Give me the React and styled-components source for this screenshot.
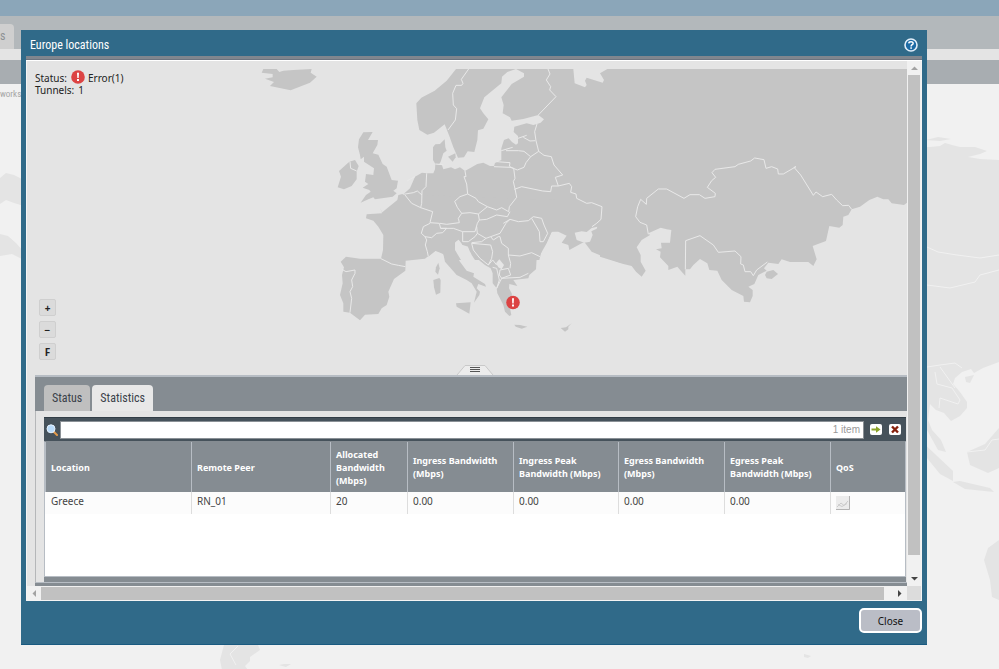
// src/components/LocationsDialog/App.jsx
import React, { useState } from 'react';
import styled, { createGlobalStyle } from 'styled-components';

const GlobalStyle = createGlobalStyle`
  * {
    box-sizing: border-box;
  }
  body {
    margin: 0;
    background-color: #f1f1f1;
    color: #222222;
    font-family: "Noto Sans", "Open Sans", sans-serif;
    font-size: 10px;
    line-height: 12px;
  }
  button, input {
    font: inherit;
    color: inherit;
  }
`;

const narrow = '"Roboto Condensed", "Open Sans Condensed", "Arial Narrow", "Liberation Sans", sans-serif';

/* Page behind the dialog */
const Page = styled.div`
  display: flex;
  flex-direction: column;
  height: 100vh;
  overflow: hidden;
`;

const TopBar = styled.div`
  flex: none;
  height: 16px;
  background-color: #8ba6b9;
`;

const PageTabs = styled.div`
  flex: none;
  display: flex;
  align-items: flex-end;
  height: 33px;
  background-color: #b3b8bb;
`;

const PageTab = styled.div`
  width: 14px;
  height: 25px;
  border-top-right-radius: 4px;
  background-color: #cfcfcf;
  color: #8d9194;
  font-family: ${narrow};
  font-size: 12px;
  line-height: 25px;
`;

const Strip = styled.div`
  flex: none;
  height: 11px;
  background-color: #e4e4e4;
`;

const PageHeading = styled.div`
  flex: none;
  height: 24px;
  background-color: #a8adb1;
`;

const PageBody = styled.div`
  display: grid;
  flex: 1;
  min-height: 0;

  > * {
    grid-area: 1 / 1;
  }
`;

const Crumb = styled.div`
  padding-top: 4px;
  color: #a5a5a5;
  font-family: ${narrow};
  font-size: 9px;
`;

const WorldSvg = styled.svg`
  display: block;
  width: 100%;
  height: 100%;
`;

/* Dialog */
const Overlay = styled.div`
  position: fixed;
  inset: 0;
  padding: 30px 72px 24px 21px;
`;

const Dialog = styled.section`
  padding: 0 5px 11px;
  border-bottom: 1px solid #195a80;
  background-color: #306a89;
`;

const TitleBar = styled.header`
  display: flex;
  align-items: center;
  justify-content: space-between;
  height: 26px;
  padding: 3px 4px 0;
`;

const Title = styled.h1`
  margin: 0;
  color: #ffffff;
  font-family: ${narrow};
  font-size: 12px;
  font-weight: normal;
  line-height: 16px;
`;

const IconButton = styled.button`
  display: flex;
  flex: none;
  padding: 0;
  border: 0;
  background: none;
`;

const Frame = styled.div`
  display: grid;
  grid-template-columns: minmax(0, 1fr) 14px;
  border: 1px solid #f4f4f4;
  border-top: 0;
  background-color: #e4e4e4;
`;

const FrameTop = styled.div`
  grid-column: 1 / -1;
  height: 5px;
  margin: 0 -1px;
  border-top: 3px solid #80868e;
  border-bottom: 1px solid #ffffff;
  background-color: #6c7480;
`;

const ScrollBar = styled.div`
  display: flex;
  flex-direction: ${(p) => (p.$horizontal ? 'row' : 'column')};
  height: ${(p) => (p.$horizontal ? '14px' : 'auto')};
  padding: ${(p) => (p.$horizontal ? '1px 0 0' : '1px 1px 0')};
  background-color: #f1f1f1;
`;

const ArrowButton = styled.button`
  display: flex;
  flex: none;
  align-items: center;
  justify-content: center;
  width: ${(p) => (p.$wide ? '14px' : '12px')};
  height: 13px;
  padding: 0;
  border: 0;
  background: none;
`;

const Thumb = styled.div`
  flex: 1;
  margin: ${(p) => p.$margin};
  background-color: #c1c1c1;
`;

const Corner = styled.div`
  background-color: #dcdcdc;
`;

const MapPanel = styled.div`
  display: grid;

  > * {
    grid-area: 1 / 1;
  }
`;

const MapSvg = styled.svg`
  display: block;
  width: 100%;
`;

const MapOverlay = styled.div`
  display: flex;
  flex-direction: column;
  justify-content: space-between;
  padding: 8px 8px 15px;
`;

const StatusLine = styled.div`
  display: flex;
  align-items: flex-end;
  gap: ${(p) => p.$gap};
  height: ${(p) => p.$height};
`;

const ZoomButtons = styled.div`
  display: flex;
  flex-direction: column;
  gap: 5px;
  padding-left: 4px;
`;

const ZoomButton = styled.button`
  width: 17px;
  height: 17px;
  padding: 0;
  border: 1px solid #cfcfcf;
  border-radius: 2px;
  background-color: #dbdbdb;
  font-weight: bold;
  line-height: 14px;
`;

const Splitter = styled.div`
  display: flex;
  align-items: flex-end;
  justify-content: center;
  padding-left: 16px;
  pointer-events: none;
`;

const LowerPanel = styled.div`
  margin-left: 8px;
  border-top: 2px solid #b7bdc4;
  border-bottom: 3px solid #858c92;
`;

const TabBar = styled.div`
  display: flex;
  align-items: flex-end;
  gap: 2px;
  height: 34px;
  padding-left: 9px;
  background-color: #858c92;
`;

const Tab = styled.button`
  height: 26px;
  padding: 0 8px;
  border: 0;
  border-radius: 4px 4px 0 0;
  background-color: ${(p) => (p.$active ? '#e8e8e8' : '#bfbfbf')};
  color: #3a4149;
  font-family: ${narrow};
  font-size: 12px;
`;

const TabContent = styled.div`
  padding: 6px 1px 0 8px;
  border-left: 1px solid #b5b7b9;
  border-bottom: 1px solid #b7bdc4;
`;

const SearchBar = styled.div`
  display: flex;
  align-items: center;
  height: 24px;
  padding: 0 5px 0 2px;
  border-top: 1px solid #323d46;
  background-color: #46525b;
`;

const SearchField = styled.label`
  display: flex;
  flex: 1;
  align-items: center;
  height: 18px;
  margin: 0 6px 0 2px;
  padding: 0 3px;
  border: 1px solid #8b9196;
  background-color: #ffffff;
  color: #999999;
  font-family: "Liberation Sans", Arial, sans-serif;
  font-size: 10px;
`;

const SearchInput = styled.input`
  flex: 1;
  min-width: 0;
  height: 16px;
  padding: 0;
  border: 0;
  outline: 0;
  background: none;
`;

const SearchActions = styled.div`
  display: flex;
  gap: 7px;
`;

const GridBody = styled.div`
  height: 136px;
  border: 1px solid #b7bdc4;
  border-top-color: #858c92;
  background-color: #ffffff;
`;

const GridFooter = styled.div`
  height: 5px;
  background-color: #858c92;
`;

const Table = styled.table`
  width: 100%;
  border-collapse: separate;
  border-spacing: 0;
  table-layout: fixed;
`;

const HeadCell = styled.th`
  width: ${(p) => p.$width};
  height: 50px;
  padding: 0 3px 0 5px;
  border-left: 1px solid #b7bdc4;
  background-color: #858c92;
  color: #ffffff;
  font-size: 9px;
  font-weight: bold;
  line-height: 13px;
  text-align: left;
`;

const Cell = styled.td`
  height: 22px;
  padding: 0 5px 4px;
  border-left: 1px solid #dddddd;
  background-color: #fcfcfc;
  color: #444444;

  &:first-child {
    border-left-color: #fcfcfc;
  }
  &:last-child {
    padding-bottom: 0;
  }
`;

const Footer = styled.footer`
  display: flex;
  justify-content: flex-end;
  padding-top: 7px;
`;

const CloseButton = styled.button`
  width: 63px;
  height: 25px;
  border: 2px solid #ffffff;
  border-radius: 5px;
  background-color: #babdc6;
  color: #111111;
`;

const columns = [
    { label: 'Location', width: '146px' },
    { label: 'Remote Peer', width: '139px' },
    { label: 'Allocated Bandwidth (Mbps)', width: '77px' },
    { label: 'Ingress Bandwidth (Mbps)', width: '106px' },
    { label: 'Ingress Peak Bandwidth (Mbps)', width: '105px' },
    { label: 'Egress Bandwidth (Mbps)', width: '106px' },
    { label: 'Egress Peak Bandwidth (Mbps)', width: '106px' },
    { label: 'QoS', width: 'auto' },
];

const rows = [
    ['Greece', 'RN_01', '20', '0.00', '0.00', '0.00', '0.00'],
];

const Arrow = ({ d, color = '#444444' }) => (
    <svg width="7" height="7" viewBox="0 0 7 7">
        <path d={d} fill={color} />
    </svg>
);

const ErrorSign = () => (
    <>
        <circle cx="7" cy="7" r="6.8" fill="#dc4343" />
        <path d="M6 2.8h2l-.3 5.2H6.3z" fill="#ffffff" />
        <rect x="6" y="9" width="2" height="2" fill="#ffffff" />
    </>
);

const WorldMap = () => (
    <WorldSvg viewBox="0 84 999 585" preserveAspectRatio="xMinYMin slice">
        <g fill="#e4e4e4">
            <path d="M900 148L930 147 940 146 945 143 952 145 960 147 975 147 987 151 980 154 968 157 980 159 999 160 999 362 983 368 974 373 971 369 962 372 955 378 953 384 960 392 967 402 967 408 960 416 951 421 944 413 936 410 930 404 928 420 932 430 941 440 946 452 938 450 927 430 900 420z" />
            <path d="M926 140L938 137 951 139 940 141z" />
            <path d="M965 377L974 375 970 383 966 382z" />
            <path d="M920 440L936 455 953 471 953 481 940 474 927 458z" />
            <path d="M953 482L960 481 990 488 994 492 965 489z" />
            <path d="M967 452L985 444 999 428 999 468 988 473 970 465z" />
            <path d="M999 540L988 548 984 560 990 580 992 597 999 600z" />
            <path d="M224 645L258 645 260 650 250 657 250 661 245 666 248 670 222 670 220 660z" />
            <path d="M279 665L284 664 291 664 286 667z" />
            <path d="M804 654L811 656 808 658 804 657z" />
            <path d="M0 178L6 173 14 175 24 180 24 206 14 203 6 200 0 204z" />
            <path d="M0 234L8 236 16 243 24 252 24 260 12 254 0 256z" />
        </g>
        <g fill="none" stroke="#f1f1f1">
            <path d="M927 247L938 252 957 255 980 258 999 255" />
            <path d="M927 285L950 288 975 282 980 275 999 270" />
            <path d="M927 367L940 365 955 363 962 368" />
            <path d="M935 372L937 384 952 388 960 400 958 404 940 398 939 408" />
            <path d="M940 367L955 388" />
            <path d="M967 452L985 450 992 440 999 439" />
            <path d="M238 646L230 654 236 665" />
        </g>
    </WorldSvg>
);

/* Outlines are drawn at three times their final size, one group per region */
const regions = {
    northWest: 'translate(240 60) scale(0.33333)',
    central: 'translate(400 60) scale(0.33333)',
    east: 'translate(600 60) scale(0.33333)',
    south: 'translate(320 180) scale(0.33333)',
};

const Land = () => (
    <g fill="#c5c5c5">
        <g transform={regions.northWest}>
            <path d="M70 27L65 38 98 42 98 52 75 56 102 66 90 78 152 91 210 68 230 50 212 38 215 27 160 30 130 32 118 36 110 27z" />
            <path d="M370 217L398 216 384 240 414 240 412 255 398 280 415 284 428 312 440 320 455 360 474 362 470 385 460 392 470 400 458 410 405 418 400 412 385 418 362 428 378 405 392 395 388 390 368 383 385 372 375 365 378 342 400 345 402 325 372 305 372 290 362 298 360 285 354 262 357 238z" />
            <path d="M345 300L328 305 297 333 303 350 293 382 312 388 335 378 350 358 350 335 356 318z" />
        </g>
        <g transform={regions.central}>
            <path d="M168 27L140 62 104 92 64 113 49 130 52 180 58 210 82 224 102 218 134 193 148 228 160 262 174 293 192 292 203 274 223 276 232 240 234 211 250 206 265 178 250 160 240 145 253 112 304 70 306 50 322 36 348 27z" />
            <path d="M348 27L372 40 372 50 335 72 304 112 311 135 308 160 330 172 335 182 370 177 415 165 432 178 422 188 411 192 400 195 380 190 343 200 341 216 354 228 354 250 348 254 336 246 326 235 312 240 304 265 304 300 285 309 282 318 270 318 250 308 232 312 195 333 180 322 165 328 153 322 130 328 126 316 106 312 105 328 100 340 80 340 66 338 45 350 30 385 10 403 0 406 0 590 85 590 110 570 130 582 137 600 183 600 165 570 165 545 180 537 188 555 205 560 215 585 225 600 418 600 428 560 438 550 443 540 455 515 475 515 500 527 485 548 505 555 508 570 545 550 553 546 575 575 610 590 660 608 660 27 622 27 600 40 612 60 608 68 560 53 555 62 560 75 555 82 524 70 520 27z" />
            <path d="M106 312L99 300 99 262 106 253 120 252 134 238 136 262 140 272 130 280 122 305 118 312z" />
            <path d="M144 290L166 280 167 292 158 305z" />
            <path d="M524 518L545 514 560 516 575 504 592 500 590 506 574 514 578 525 570 545 553 548 530 540z" fill="#e4e4e4" />
        </g>
        <g transform={regions.east}>
            <path d="M30 27L921 27 921 428 912 435 875 430 865 418 850 418 832 410 808 420 780 440 755 448 745 465 730 470 728 495 718 503 688 498 678 543 638 558 650 598 640 618 625 606 570 606 545 598 535 612 505 608 492 625 500 632 475 645 463 672 445 680 458 690 458 708 450 727 432 725 430 708 395 690 365 660 352 632 328 630 322 610 300 597 280 615 270 628 256 628 256 647 245 635 232 620 205 630 205 618 180 592 182 575 168 568 185 565 183 548 210 548 214 510 200 508 182 503 145 520 150 525 125 540 110 562 122 585 122 605 137 632 125 650 108 635 95 618 70 612 0 590 0 200 30 200z" />
            <path d="M495 645L500 635 520 630 534 642 515 657 500 655z" />
        </g>
        <g transform={regions.south}>
            <path d="M245 43L235 45 232 60 185 98 181 82 186 100 140 103 138 115 160 122 175 140 190 165 189 210 183 236 120 236 78 230 62 245 72 262 66 285 68 310 60 345 70 370 70 395 90 398 120 421 135 404 175 402 185 385 200 375 208 350 205 335 222 297 256 272 257 242 315 236 345 212 370 222 375 245 410 285 440 300 455 310 470 335 462 368 478 345 480 335 470 325 475 312 498 320 495 312 460 290 462 280 440 272 420 245 405 220 403 190 415 178 428 195 442 195 450 215 470 235 495 255 512 265 518 280 518 310 530 325 532 340 550 375 555 395 568 408 574 405 570 385 578 370 575 340 567 325 568 312 592 318 580 300 625 295 628 285 648 268 650 235 660 225 680 190 695 155 715 150 715 60z" />
            <path d="M348 262L355 248 359 265 354 284 346 275z" />
            <path d="M340 300L358 294 362 300 361 338 348 344 342 322z" />
            <path d="M408 370L452 367 448 401 410 380z" />
            <path d="M583 434L600 435 622 440 605 446 587 440z" />
            <path d="M722 444L738 442 755 430 745 440 745 448 735 455z" />
            <path d="M528 250L538 238 552 255 545 268 535 262z" fill="#e6e6e6" />
        </g>
    </g>
);

const Borders = () => (
    <g fill="none" stroke="#e9e9e9" strokeWidth="3">
        <g transform={regions.northWest}>
            <path d="M330 305L332 325 350 333" />
        </g>
        <g transform={regions.central}>
            <path d="M206 27L184 58 189 70 185 76 168 76 158 100 160 135 170 146 166 180 144 210" />
            <path d="M444 27L450 42 439 60 452 80 449 90 468 110 415 165" />
            <path d="M354 235L380 226M370 232L390 243 406 242M411 192L404 215 408 242 416 274" />
            <path d="M304 272L338 262M318 272L355 272 372 274 392 290 416 274" />
            <path d="M392 290L378 308 372 322 352 330 340 325 330 320" />
            <path d="M290 305L330 308 328 320M282 320L330 322 341 325 345 355 340 365 345 386" />
            <path d="M416 274L432 286 454 290 462 315 488 345 466 352 475 378" />
            <path d="M343 388L365 380 428 393 452 395 455 378 475 378 508 370 515 380 512 397 528 402 530 415 560 430 575 428 606 440 603 478 590 490 576 500" />
            <path d="M345 386L350 412 328 440 326 455 305 443 290 450 262 440" />
            <path d="M195 333L198 350 192 350 200 372 203 402 228 415 235 425 262 440 235 462 210 458 185 460 172 442 164 424 180 410 203 402" />
            <path d="M185 460L175 475 178 488 140 493 120 490" />
            <path d="M22 362L45 350M106 312L130 314" />
            <path d="M80 340L78 380 66 392 65 430 62 443 98 455 90 488" />
            <path d="M10 403L40 398 52 393 66 405M15 405L35 430 62 443" />
            <path d="M90 488L118 490 122 505 140 505 128 518 110 520 95 533 75 530 64 520 70 500 90 490" />
            <path d="M75 530L80 540 76 555 82 575 85 590" />
            <path d="M122 505L160 505 188 515 225 515 232 490 238 480 235 462" />
            <path d="M238 480L260 478 290 465 322 470 330 455" />
            <path d="M330 478L318 490 300 520 272 530 258 535 232 520 230 500" />
            <path d="M310 490L330 478 355 485 385 482 400 470 425 475 432 495 443 520 430 545 420 545 418 515 395 475" />
            <path d="M188 515L188 545 205 545 225 530 232 520M258 535L245 545 215 548" />
            <path d="M272 530L280 540 295 530 300 530 305 550 325 565 325 585 360 588 395 578 420 590" />
        </g>
        <g transform={regions.east}>
            <path d="M145 523L140 495 120 487 107 470 113 440 122 418 139 433 140 415 175 387 200 387 252 415 270 404 298 404 315 415 345 410 346 400 322 382 335 362 347 352 336 338 345 328 405 320 415 313 452 303 464 294 492 299 498 325 515 320 533 327 535 342 550 342 588 320 582 322 602 345 640 406 648 396 668 410 695 403 710 420 728 437 746 436 755 448" />
            <path d="M256 628L257 542 300 527 340 555 355 577 405 573 423 590 422 612 430 615 435 635 452 635 460 647 470 630 502 606" />
        </g>
        <g transform={regions.south}>
            <path d="M183 236L215 252 235 256 256 260" />
            <path d="M66 268L78 275 105 270 105 280 95 300 98 320 90 335 95 355 90 398" />
            <path d="M455 190L460 210 480 235 505 255 515 235 518 215 512 195z" />
            <path d="M505 255L518 240 530 255M565 225L572 250 570 265" />
            <path d="M540 270L565 265 572 285 545 295 538 285z" />
            <path d="M518 262L530 265 538 300 530 325 540 305 545 295 600 292 625 280" />
        </g>
    </g>
);

const EuropeMap = () => (
    <MapSvg viewBox="27 61 880 314">
        <Land />
        <Borders />
        <g transform="translate(506 295.5)">
            <ErrorSign />
        </g>
    </MapSvg>
);

const App = () => {
    const [activeTab, setActiveTab] = useState('Statistics');
    const [filter, setFilter] = useState('');

    return (
        <>
            <GlobalStyle />
            <Page>
                <TopBar />
                <PageTabs>
                    <PageTab>s</PageTab>
                </PageTabs>
                <Strip />
                <PageHeading />
                <PageBody>
                    <WorldMap />
                    <Crumb>works</Crumb>
                </PageBody>
            </Page>

            <Overlay>
                <Dialog role="dialog" aria-labelledby="dialog-title">
                    <TitleBar>
                        <Title id="dialog-title">Europe locations</Title>
                        <IconButton aria-label="Help">
                            <svg width="14" height="14" viewBox="0 0 14 14">
                                <circle cx="7" cy="7" r="6" fill="#1d6ba5" stroke="#e3effa" strokeWidth="1.6" />
                                <path d="M4.8 5.4C4.9 3.3 9.2 3.3 9.1 5.4 9.1 6.7 7.1 6.7 7.1 8.4" fill="none" stroke="#ffffff" strokeWidth="1.5" />
                                <rect x="6.3" y="9.3" width="1.6" height="1.5" fill="#ffffff" />
                            </svg>
                        </IconButton>
                    </TitleBar>

                    <Frame>
                        <FrameTop />
                        <div>
                            <MapPanel>
                                <EuropeMap />
                                <MapOverlay>
                                    <div>
                                        <StatusLine $gap="3px" $height="15px">
                                            <StatusLine $gap="4px" $height="15px">
                                                <span>Status:</span>
                                                <svg width="14" height="14" viewBox="0 0 14 14">
                                                    <ErrorSign />
                                                </svg>
                                            </StatusLine>
                                            <span>Error(1)</span>
                                        </StatusLine>
                                        <StatusLine $gap="4px" $height="12px">
                                            <span>Tunnels:</span>
                                            <span>1</span>
                                        </StatusLine>
                                    </div>
                                    <ZoomButtons>
                                        <ZoomButton>+</ZoomButton>
                                        <ZoomButton>−</ZoomButton>
                                        <ZoomButton>F</ZoomButton>
                                    </ZoomButtons>
                                </MapOverlay>
                                <Splitter>
                                    <svg width="38" height="10" viewBox="0 0 38 10">
                                        <path d="M1 10L9 .5H29L37 10" fill="#ececec" stroke="#c9c9c9" />
                                        <path d="M14 2.5H24M14 4.5H24M14 6.5H24" stroke="#555555" />
                                    </svg>
                                </Splitter>
                            </MapPanel>

                            <LowerPanel>
                                <TabBar role="tablist">
                                    {['Status', 'Statistics'].map((tab) => (
                                        <Tab
                                            key={tab}
                                            role="tab"
                                            aria-selected={activeTab === tab}
                                            $active={activeTab === tab}
                                            onClick={() => setActiveTab(tab)}
                                        >
                                            {tab}
                                        </Tab>
                                    ))}
                                </TabBar>
                                <TabContent>
                                    <SearchBar>
                                        <svg width="12" height="12" viewBox="0 0 12 12">
                                            <path d="M7.5 7.5L11 11" stroke="#e39a4a" strokeWidth="2" strokeLinecap="round" />
                                            <circle cx="5" cy="4.8" r="4" fill="#b9dcfb" stroke="#e6f2ff" />
                                        </svg>
                                        <SearchField>
                                            <SearchInput
                                                aria-label="Filter"
                                                value={filter}
                                                onChange={(e) => setFilter(e.target.value)}
                                            />
                                            <span>1 item</span>
                                        </SearchField>
                                        <SearchActions>
                                            <IconButton aria-label="Apply filter">
                                                <svg width="12" height="11" viewBox="0 0 12 11">
                                                    <rect width="12" height="11" rx="2" fill="#ffffff" />
                                                    <path d="M1.5 4.6H6V2.2L10.5 5.5 6 8.8V6.4H1.5z" fill="#8ba32a" />
                                                </svg>
                                            </IconButton>
                                            <IconButton aria-label="Clear filter">
                                                <svg width="12" height="11" viewBox="0 0 12 11">
                                                    <rect width="12" height="11" rx="2" fill="#ffffff" />
                                                    <path d="M3 2.5L9 8.5M9 2.5L3 8.5" stroke="#86200c" strokeWidth="2.4" />
                                                </svg>
                                            </IconButton>
                                        </SearchActions>
                                    </SearchBar>
                                    <GridBody>
                                        <Table>
                                            <thead>
                                                <tr>
                                                    {columns.map((column) => (
                                                        <HeadCell key={column.label} $width={column.width}>
                                                            {column.label}
                                                        </HeadCell>
                                                    ))}
                                                </tr>
                                            </thead>
                                            <tbody>
                                                {rows.map((row) => (
                                                    <tr key={row[1]}>
                                                        {row.map((value, i) => (
                                                            <Cell key={columns[i].label}>{value}</Cell>
                                                        ))}
                                                        <Cell>
                                                            <IconButton aria-label="Show QoS chart">
                                                                <svg width="14" height="14" viewBox="0 0 14 14">
                                                                    <rect width="14" height="14" fill="#ececec" />
                                                                    <path d="M13.5 0V13.5H0" fill="none" stroke="#b4b4b4" />
                                                                    <path d="M1 11L5 7 8 9.5 12 5M2 8.5L6 10.5 11 7.5" fill="none" stroke="#cccccc" />
                                                                </svg>
                                                            </IconButton>
                                                        </Cell>
                                                    </tr>
                                                ))}
                                            </tbody>
                                        </Table>
                                    </GridBody>
                                    <GridFooter />
                                </TabContent>
                            </LowerPanel>
                        </div>
                        <ScrollBar>
                            <ArrowButton aria-label="Scroll up">
                                <Arrow d="M0 5L3.5 1.5 7 5z" color="#a3a3a3" />
                            </ArrowButton>
                            <Thumb $margin="0 0 18px" />
                            <ArrowButton aria-label="Scroll down">
                                <Arrow d="M0 1L3.5 4.5 7 1z" />
                            </ArrowButton>
                        </ScrollBar>
                        <ScrollBar $horizontal>
                            <ArrowButton $wide aria-label="Scroll left">
                                <Arrow d="M5 0L1.5 3.5 5 7z" color="#a3a3a3" />
                            </ArrowButton>
                            <Thumb $margin="0 9px 0 0" />
                            <ArrowButton $wide aria-label="Scroll right">
                                <Arrow d="M1 0L4.5 3.5 1 7z" />
                            </ArrowButton>
                        </ScrollBar>
                        <Corner />
                    </Frame>

                    <Footer>
                        <CloseButton>Close</CloseButton>
                    </Footer>
                </Dialog>
            </Overlay>
        </>
    );
};

export default App;
